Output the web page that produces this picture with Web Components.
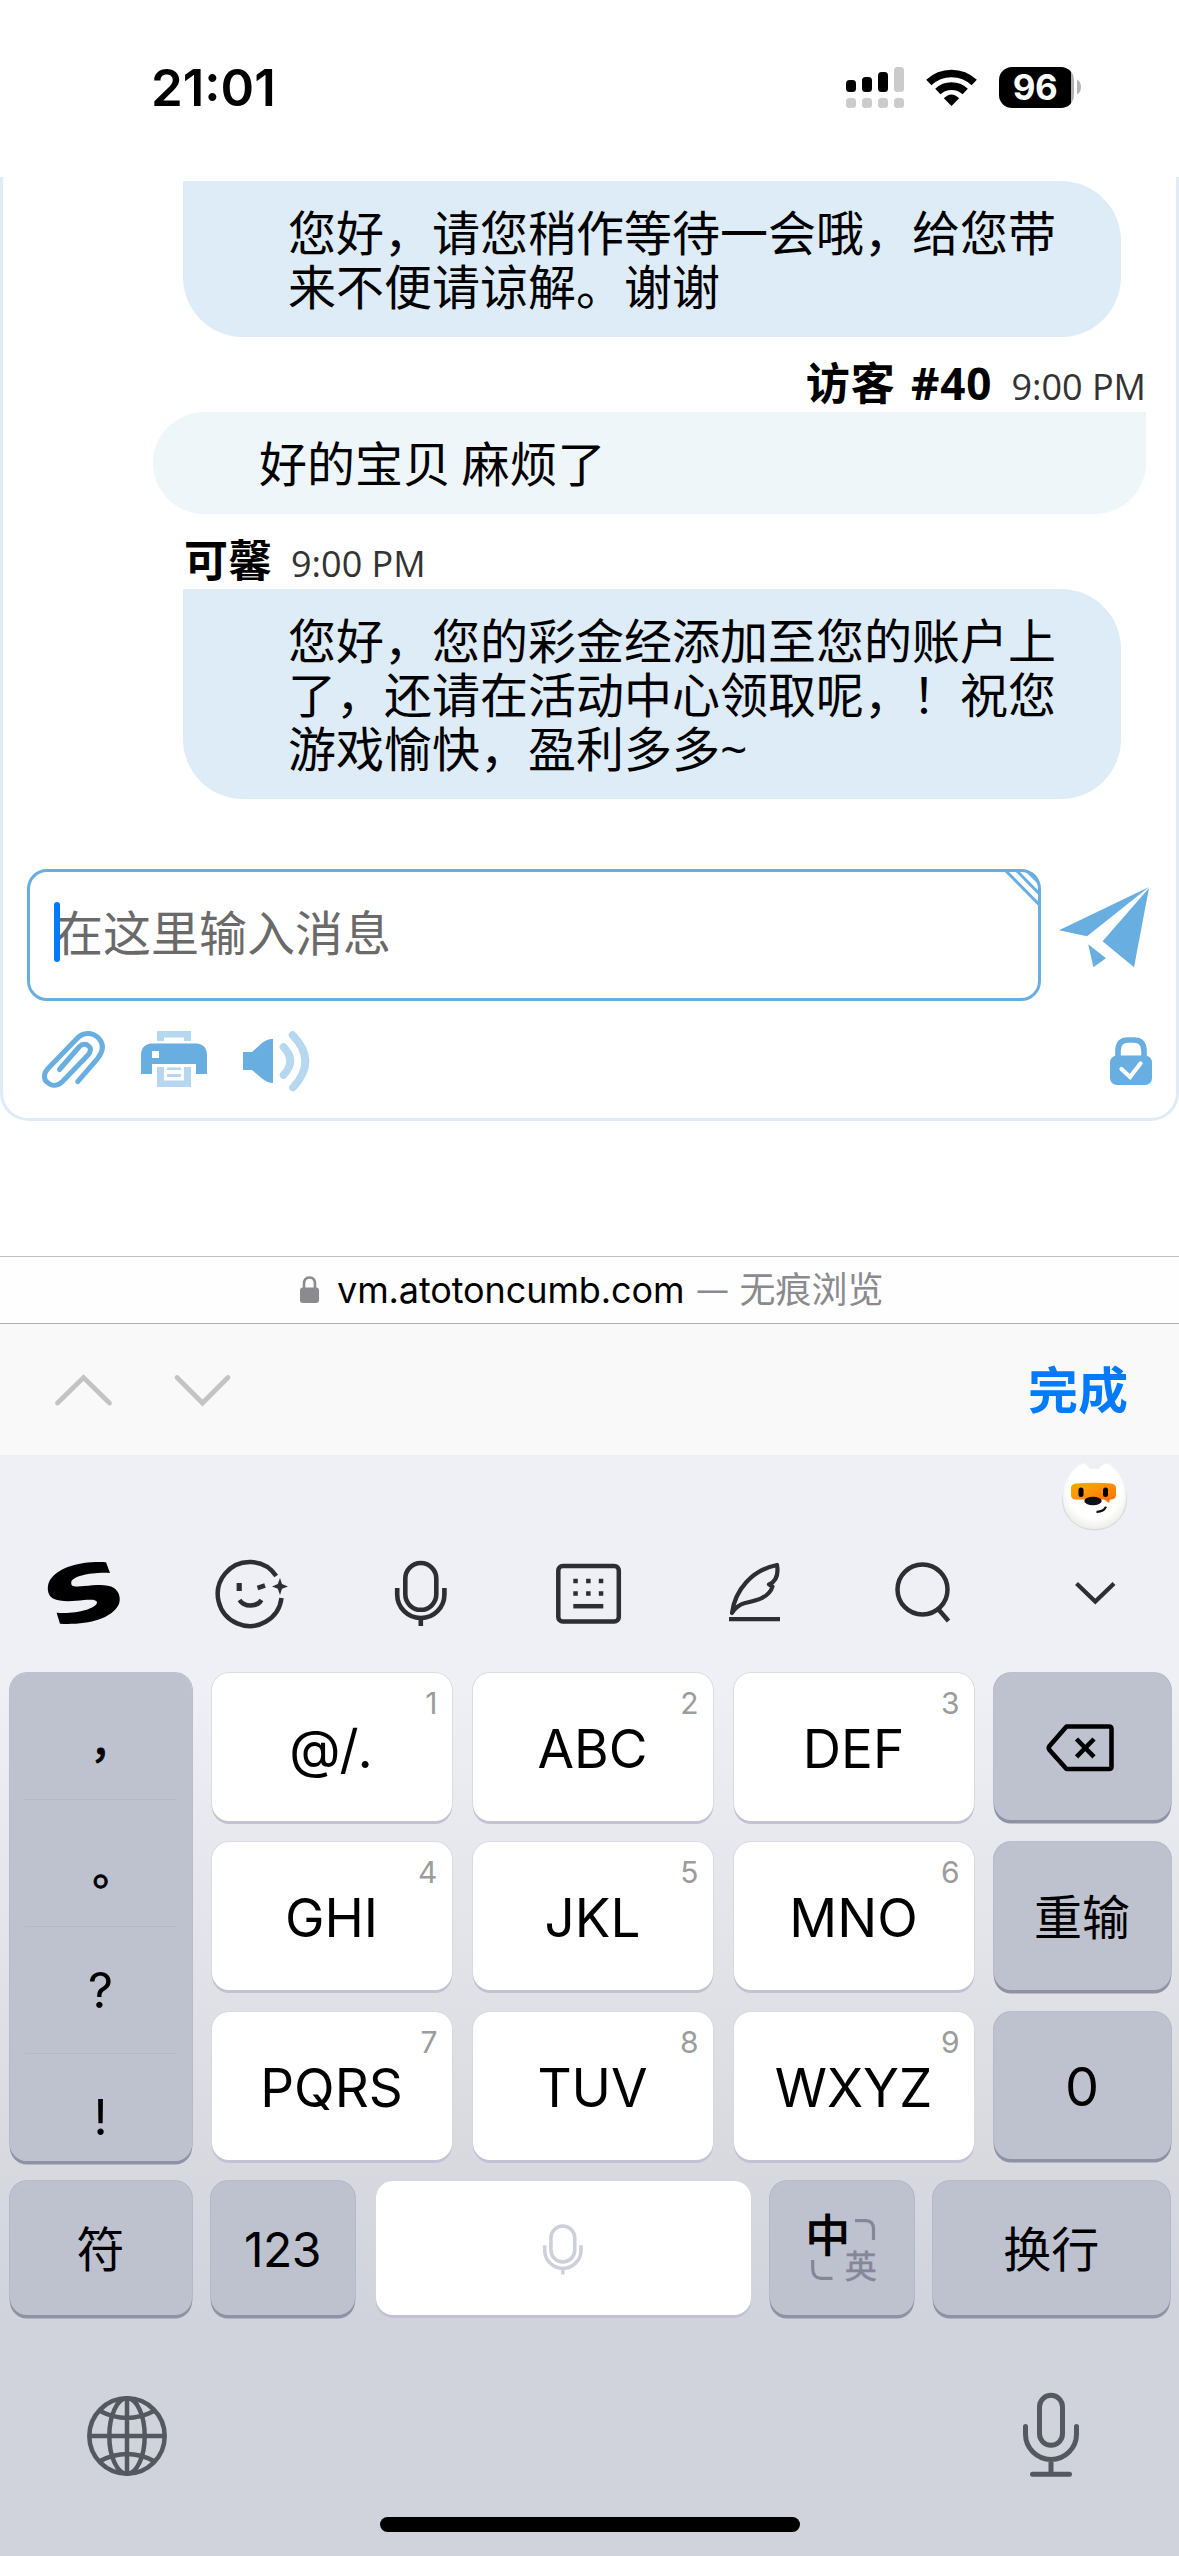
<!DOCTYPE html>
<html lang="zh-CN">
<head>
<meta charset="utf-8">
<title>Chat</title>
<style>
html,body{margin:0;padding:0;background:#fff}
body{width:1179px;height:2556px;overflow:hidden;font-family:"Inter","Noto Sans CJK SC",sans-serif;color:#000;text-spacing-trim:space-all}
</style>
</head>
<body>
<phone-screen></phone-screen>
<script>
const ICONS = {
  signal:`<g fill="#000"><rect x="846" y="80" width="10" height="12" rx="3.5"/><rect x="862" y="77" width="10" height="15" rx="3.5"/><rect x="878" y="72" width="10" height="20" rx="3.5"/></g><g fill="#cbcbcb"><rect x="894" y="67" width="10" height="25" rx="3.5"/><rect x="846" y="98" width="10" height="10" rx="3.5"/><rect x="862" y="98" width="10" height="10" rx="3.5"/><rect x="878" y="98" width="10" height="10" rx="3.5"/><rect x="894" y="98" width="10" height="10" rx="3.5"/></g>`,
  wifi:`<g fill="none" stroke="#000" stroke-width="7.6"><path d="M928.8 82.5A33 33 0 0 1 974.2 82.5"/><path d="M937.8 91.6A20 20 0 0 1 965.2 91.6"/></g><path d="M951.5 106L943.8 98.2Q951.5 90.6 959.2 98.2Z"/>`,
  clip:`<path d="M77.7 1081.6L97.5 1058.6C103.500 1051 104 1043.500 98 1037.500C92 1032 83 1032 77 1038.500L48.500 1068C43.500 1073 43 1079 47.500 1082.500C52 1086.500 58 1086 62.500 1081.500L87.500 1055.500C91 1051.500 91.500 1048 88.500 1046C86 1043.500 82 1043.800 79 1047L59.500 1069.500" fill="none" stroke="#69aee0" stroke-width="5" stroke-linecap="round"/>`,
  printer:`<path d="M157 1041V1031H191V1041H184V1037.500H164V1041Z" fill="#b5d7f0"/><path d="M152 1043.600H196Q207 1044 207 1056V1074H196V1064H152V1074H141V1056Q141 1044 152 1043.600ZM152 1051V1058H159V1051Z" fill="#69aee0" fill-rule="evenodd"/><path d="M157 1067H164V1080.500H184V1067H191V1087H157ZM167 1067.500H181V1070H167ZM167 1074H181V1077H167Z" fill="#b5d7f0"/>`,
  speaker:`<path d="M243 1052H252L262 1043Q268 1038.500 273 1039V1083Q268 1083 262 1078.500L252 1070H243Z" fill="#69aee0"/><g fill="none" stroke="#b5d7f0" stroke-width="7.6" stroke-linecap="round"><path d="M283.500 1047Q297 1061 283.500 1075"/><path d="M292.500 1035Q318 1061 293 1087.500"/></g>`,
  plane:`<g fill="#69aee0"><path d="M1149 887L1059 930.300L1087 936.300Z"/><path d="M1149 888L1102.600 941.300L1134 967.300Z"/><path d="M1088.200 944.300L1106 958.300L1093.400 967.300Z"/></g>`,
  secure:`<path d="M1118 1058V1051Q1118 1040 1128 1040H1134Q1144 1040 1144 1051V1058" fill="none" stroke="#69aee0" stroke-width="5.600"/><rect x="1110" y="1055.500" width="42" height="29.500" rx="7" fill="#69aee0"/><path d="M1121.500 1069L1130 1077L1140.500 1063.500" fill="none" stroke="#fff" stroke-width="4.200" stroke-linecap="round"/>`,
  hatch:`<g stroke="#69aee0" stroke-width="3" fill="none"><path d="M1006 871L1040 905.500"/><path d="M1017 871L1040 894.500"/></g><path d="M1024 870Q1038 871 1040 886Z" fill="#69aee0"/>`,
  lock:`<path d="M304 1289V1284Q304 1277.500 309.500 1277.500Q315 1277.500 315 1284V1289" fill="none" stroke="#8a8a8f" stroke-width="2.600"/><rect x="300" y="1287.500" width="19" height="15.500" rx="3" fill="#8a8a8f"/>`,
  up:`<path d="M57.500 1402L83.500 1376.500L109.500 1402" fill="none" stroke="#c3c3c4" stroke-width="4.800" stroke-linecap="round"/>`,
  down:`<path d="M177 1377.500L202.500 1403L228 1377.500" fill="none" stroke="#c3c3c4" stroke-width="4.800" stroke-linecap="round"/>`,
  fox:`<defs><radialGradient id="b" cx=".5" cy=".42" r=".6"><stop offset=".7" stop-color="#fff"/><stop offset="1" stop-color="#ecebe4"/></radialGradient><linearGradient id="o" x1="0" y1="0" x2="1" y2="1"><stop offset=".3" stop-color="#ff9d05"/><stop offset="1" stop-color="#ff6a05"/></linearGradient></defs><ellipse cx="1094.500" cy="1500" rx="32.500" ry="30.500" fill="#d9dae0"/><path d="M1083 1463Q1086 1464 1090 1469Q1094.500 1468.300 1098.500 1469Q1103 1464 1107 1463C1118 1467 1126 1484 1126 1498C1126 1516 1113 1529 1094.500 1529C1076 1529 1063 1516 1063 1498C1063 1484 1071 1467 1083 1463Z" fill="url(#b)"/><path d="M1076 1483.500Q1094 1482 1111 1483.500Q1116 1484 1116 1488V1495Q1116 1499.500 1110 1499.500L1109 1503L1104 1499.500H1076Q1071 1499.500 1071 1495V1488Q1071 1484 1076 1483.500Z" fill="url(#o)"/><rect x="1078.500" y="1487.500" width="5" height="9.500" rx="2.500"/><rect x="1103" y="1487.500" width="5" height="9.500" rx="2.500"/><ellipse cx="1093" cy="1501" rx="8.700" ry="4.200" fill="#111"/><path d="M1096.500 1511.800Q1103.500 1512 1106 1506.800" fill="none" stroke="#111" stroke-width="2.200"/>`,
  sogou:`<path d="M106 1562.300L110 1573C92 1572 72 1576 71.200 1582.500C71 1587.500 76 1586.600 84 1586C96 1585 107 1583.500 114 1588C120 1592 121 1600 118.500 1605C110 1620 86 1625 60 1623.700L56.600 1612.700C74 1614.500 96 1609 97 1602.800C97 1599 90 1599.500 84 1600C72 1601.500 60 1602 53 1598.500C47 1595 47 1587 49 1582C57 1566 84 1561 106 1562.300Z"/>`,
  emoji:`<g fill="none" stroke="#2d2d32" stroke-width="4.500"><path d="M276.200 1576A32 32 0 1 0 281.500 1598"/><path d="M239.500 1600Q243 1605.500 250.500 1605.500Q258 1605.500 261.500 1600"/><path d="M239.200 1583V1591" stroke-width="5.200"/><path d="M257.500 1588L265 1585.500"/></g><path d="M280 1578L282 1584L288 1586.500L282 1588.800L280 1595L277.800 1588.800L272 1586.500L277.800 1584Z" fill="#2d2d32"/>`,
  mic:`<g fill="none" stroke="currentColor" stroke-width="4.600"><rect x="405.300" y="1563" width="31" height="46.800" rx="15.500"/><path d="M397.200 1588V1594.500A23.600 23.600 0 0 0 444.400 1594.500V1588M420.800 1618V1626"/></g>`,
  board:`<g fill="none" stroke="#2d2d32" stroke-width="4.500"><rect x="558" y="1566" width="60.500" height="55.500" rx="4.500"/><path d="M573 1606.200H603"/><path d="M573 1581H577.500M585.800 1581H590.300M598.500 1581H603M573 1593.500H577.500M585.800 1593.500H590.300M598.500 1593.500H603" stroke-width="4.300"/></g>`,
  feather:`<g fill="none" stroke="#2d2d32" stroke-width="4.200" stroke-linejoin="round" stroke-linecap="round"><path d="M732 1613C735 1590 752 1570 777 1565Q779.500 1580 769 1584.500L772.500 1586.500C769 1598 756 1600.500 745 1603Q737 1605 732 1613Z"/><path d="M729 1619.200H780" stroke-linecap="butt"/></g>`,
  search:`<g fill="none" stroke="#2d2d32" stroke-width="4.500"><circle cx="922.500" cy="1589.500" r="25"/><path d="M939 1610L948.500 1621"/></g>`,
  fold:`<path d="M1076.500 1583.500L1095.300 1601.500L1114 1583.500" fill="none" stroke="#2d2d32" stroke-width="4.200"/>`,
  erase:`<g fill="none" stroke="#000" stroke-width="4.600" stroke-linejoin="round"><path d="M1065.500 1727.500H1108Q1110.500 1727.500 1110.500 1730V1767.500Q1110.500 1770 1108 1770H1065.500L1048.500 1751Q1047 1749 1048.500 1747Z"/><path d="M1075.500 1740L1093 1757.800M1093 1740L1075.500 1757.800"/></g>`,
  swap:`<g fill="none" stroke="#86869a" stroke-width="3.200"><path d="M855 2220.700H866Q873.500 2221 873.500 2229V2240"/><path d="M812.700 2260V2269Q813 2278 821 2278.300H832.500"/></g>`,
  globe:`<g fill="none" stroke="#54585f" stroke-width="4.500"><circle cx="127" cy="2436" r="37.700"/><ellipse cx="127" cy="2436" rx="17.700" ry="37.700"/><path d="M127 2398V2474M89 2436H165M100 2411Q127 2425 154 2411M100 2461Q127 2447 154 2461"/></g>`,
  dictate:`<g fill="none" stroke="#54585f" stroke-width="5" stroke-linecap="round"><rect x="1039.500" y="2393.300" width="23" height="50" rx="11.500"/><path d="M1025.500 2424.500V2432A25.500 25.500 0 0 0 1076.500 2432V2424.500M1051 2458V2472M1032.500 2472.300H1069.500"/></g>`
};
const define = (name, html, after) => customElements.define(name, class extends HTMLElement {
  connectedCallback(){
    if (this.shadowRoot) return;
    this.attachShadow({mode:'open'}).innerHTML = html;
    if (after) after(this, this.shadowRoot);
  }
});

/* box = "x y w h" in screen units, used both for the viewBox and the drawn size */
define('ui-icon', `<style>:host{display:block;flex:none}svg{display:block;overflow:visible}</style>`, (el, root) => {
  const b = el.getAttribute('box'), [,,w,h] = b.split(' ');
  root.innerHTML += `<svg viewBox="${b}" width="${el.getAttribute('w')||w}" height="${el.getAttribute('h')||h}">${ICONS[el.getAttribute('name')]}</svg>`;
});

define('status-bar', `<style>
:host{display:flex;height:177px;box-sizing:border-box;padding:0 98px 0 151px;align-items:flex-start}
.time{font:600 51px/60px Inter,sans-serif;margin-top:58px;flex:1}
.r{display:flex;margin-top:67px}
.bat{margin-left:22px;width:75px;height:41px;border-radius:13px;background:linear-gradient(90deg,#000 72px,#b0b0b0 72px);color:#fff;font:700 35px/41px Inter,sans-serif;text-align:center;letter-spacing:-.5px;text-indent:-3px}
.nub{width:4px;height:14px;margin:13px 0 0 3px;border-radius:0 4px 4px 0/0 7px 7px 0;background:#b4b4b4}
.wifi{margin-left:22px}
</style><div class="time">21:01</div><div class="r"><ui-icon name="signal" box="846 67 58 41"></ui-icon><ui-icon class="wifi" name="wifi" box="926 67 51 41"></ui-icon><div class="bat">96</div><div class="nub"></div></div>`);

define('chat-bubble', `<style>
:host{display:block;box-sizing:border-box;padding:25px 0 23px 105px;margin:0 55px 0 180px;border-radius:0 60px 60px 60px;background:#deecf8;font:400 48px/54px "Open Sans","Noto Sans CJK SC",sans-serif;white-space:nowrap}
:host([mine]){margin:0 30px 0 150px;padding-left:106px;border-radius:51px 0 51px 51px;background:#eef6fa;word-spacing:-2px}
</style><slot></slot>`);

define('chat-meta', `<style>
:host{display:flex;height:75px;box-sizing:border-box;padding:19px 30px 0 181px;gap:19px;align-items:baseline;font:400 36px/54px "Open Sans",sans-serif;color:#333}
:host([mine]){justify-content:flex-end}
b{font:700 44px/54px "Open Sans","Noto Sans CJK SC",sans-serif;color:#000;word-spacing:3px}
:host([mine]) b{letter-spacing:.9px}
</style><b><slot name="who"></slot></b><span><slot></slot></span>`);

define('message-box', `<style>
:host{display:flex;margin:70px 27px 0 24px;align-items:flex-start;justify-content:space-between}
.in{position:relative;box-sizing:border-box;width:1014px;height:132px;border:3px solid #69aee0;border-radius:20px;padding:28px 0 0 25px;font:400 48px/60px "Noto Sans CJK SC",sans-serif;color:#6a6a6a}
.caret{position:absolute;left:24px;top:30px;width:6px;height:60px;border-radius:3px;background:#007aff}
.h{position:absolute;right:-2px;top:-3px}
.p{margin-top:18px}
</style><div class="in">在这里输入消息<i class="caret"></i><ui-icon class="h" name="hatch" box="1004 869 36 38"></ui-icon></div><ui-icon class="p" name="plane" box="1059 887 90 81"></ui-icon>`);

define('chat-tools', `<style>:host{display:flex;margin:30px 24px 0 39px;gap:36px}.s{margin:6px 0 0 auto}</style>
<ui-icon name="clip" box="42 1031 63 60"></ui-icon><ui-icon name="printer" box="141 1031 66 60"></ui-icon><ui-icon name="speaker" box="243 1031 66 60"></ui-icon><ui-icon class="s" name="secure" box="1110 1037 42 48"></ui-icon>`);

define('chat-panel', `<style>:host{display:block;box-sizing:border-box;height:944px;border:3px solid #deecf8;border-top:0;border-radius:0 0 28px 28px;padding-top:4px}</style>
<chat-bubble>您好，请您稍作等待一会哦，给您带<br>来不便请谅解。谢谢</chat-bubble>
<chat-meta mine><span slot="who">访客 #40</span>9:00 PM</chat-meta>
<chat-bubble mine>好的宝贝 麻烦了</chat-bubble>
<chat-meta><span slot="who">可馨</span>9:00 PM</chat-meta>
<chat-bubble>您好，您的彩金经添加至您的账户上<br>了，还请在活动中心领取呢，！祝您<br>游戏愉快，盈利多多~</chat-bubble>
<message-box></message-box><chat-tools></chat-tools>`);

define('url-bar', `<style>:host{display:flex;box-sizing:border-box;height:68px;margin-top:135px;border-top:1px solid #c2c2c4;border-bottom:1px solid #b0b0b2;padding-left:300px;background:#fefefe;font:400 36px/66px Inter,"Noto Sans CJK SC",sans-serif;white-space:pre}
ui-icon{margin:19px 18px 0 0}.u{letter-spacing:-.1px}.g{color:#8a8a8f}.g.d{margin:0 12px 0 13px;font-size:30px}</style>
<ui-icon name="lock" box="300 1276 19 28"></ui-icon><span class="u">vm.atotoncumb.com</span><span class="g d">—</span><span class="g">无痕浏览</span>`);

define('input-accessory', `<style>:host{display:flex;height:131px;background:#f9f9f9;align-items:center;padding:0 51px 0 55px;font:700 50px/60px "Noto Sans CJK SC",sans-serif;color:#007aff}
.d{margin-left:62px}span{margin:-5px 0 0 auto}</style>
<ui-icon name="up" box="55 1373 57 32"></ui-icon><ui-icon class="d" name="down" box="174 1374 57 32"></ui-icon><span>完成</span>`);

define('kb-tools', `<style>:host{display:flex;margin:27px 62px 0 48px;height:72px;align-items:flex-start;color:#2d2d32}
.a{margin-left:96px}.b{margin-left:106px}.c{margin-left:108.700px}.d{margin-left:108.300px}.e{margin-left:115px}.f{margin-left:125px}
</style>
<ui-icon name="sogou" box="48 1558 72 70"></ui-icon><ui-icon class="a" name="emoji" box="216 1558 73 70"></ui-icon><ui-icon class="b" name="mic" box="395 1558 52 70"></ui-icon><ui-icon class="c" name="board" box="555.7 1558 65 70"></ui-icon><ui-icon class="d" name="feather" box="729 1558 51 70"></ui-icon><ui-icon class="e" name="search" box="895 1558 55 70"></ui-icon><ui-icon class="f" name="fold" box="1075 1558 41 70"></ui-icon>`);

define('kb-key', `<style>
:host{position:relative;display:flex;box-sizing:border-box;align-items:center;justify-content:center;background:#fff;border-radius:17px;box-shadow:0 3px 0 #c3c2d4,0 0 0 .8px #d5d6e0;font:400 53px/60px Inter,"Noto Sans CJK SC",sans-serif;color:#000;height:148px;width:240px;padding-top:4px}
:host([dark]){background:#bec2cf;box-shadow:0 3.500px 0 #8f91a4,0 0 0 .8px #adb1c2;height:147.500px;width:177px}
:host([low]){height:134px}
i{position:absolute;right:14px;top:13px;font:400 30px/34px Inter,sans-serif;color:#9c9c9c}
</style><slot></slot>`, (el, root) => { if (el.hasAttribute('n')) root.innerHTML += `<i>${el.getAttribute('n')}</i>`; });

define('kb-punct', `<style>
:host{display:block;box-sizing:border-box;width:182px;height:488px;overflow:hidden;border-radius:17px;padding:0 15px;background:#bec2cf;font:400 49px/128px Inter,"Noto Sans CJK TC",sans-serif;text-align:center}
div{height:126px;border-bottom:1px solid #b4b7c8}
.c{line-height:158px;height:126px;font-family:"Noto Sans CJK TC",sans-serif;font-size:43px;-webkit-text-stroke:1px #000}
</style><div class="c" lang="zh-TW">，</div><div class="c" lang="zh-TW">。</div><div>?</div><div>!</div>`);

define('key-board', `<style>
:host{display:flex;flex-direction:column;height:1101px;background:linear-gradient(#eff0f5 0,#eff0f5 230px,#d9dae0 690px,#d0d3dc 870px,#d0d3dc 100%)}
.fox{margin:8px 0 0 1062px}
.rows{display:flex;margin:42.500px 8.500px 0 9.500px;justify-content:space-between}
.grid{display:grid;grid-template-columns:repeat(3,240px);gap:21.500px 21px}
.side{display:flex;flex-direction:column;gap:22px}
.side ui-icon{margin-right:5px}
.pw{border-radius:17px;box-shadow:0 3.500px 0 #8f91a4,0 0 0 .8px #adb1c2;height:488px}
.last{display:flex;margin:20px 9px 0 9.500px;gap:19px}
.sw{display:grid;position:relative;width:66px;height:68px;margin-top:-6px}
.sw b{font:400 44px/44px "Noto Sans CJK SC",sans-serif;-webkit-text-stroke:1.300px #000;position:absolute;left:-3px;top:-2px}
.sw em{font:400 32px/32px "Noto Sans CJK SC",sans-serif;-webkit-text-stroke:.6px #86869a;position:absolute;left:36px;top:35px;color:#86869a}
.sw ui-icon{margin:6px 0 0 2px}
.zh{font-size:48px}
.num{font-size:48px;letter-spacing:-.5px}
.zero{font-size:54px}
.wide{letter-spacing:1px}
.foot{display:flex;justify-content:space-between;margin:75.500px 98px 0 86px}
.home{width:420px;height:15px;border-radius:8px;background:#000;margin:39px auto 0}
</style>
<ui-icon class="fox" name="fox" box="1062 1463 65 68"></ui-icon>
<kb-tools></kb-tools>
<div class="rows">
<div class="pw"><kb-punct></kb-punct></div>
<div class="grid"><kb-key n="1"><span class="wide">@/.</span></kb-key><kb-key n="2">ABC</kb-key><kb-key n="3">DEF</kb-key><kb-key n="4">GHI</kb-key><kb-key n="5">JKL</kb-key><kb-key n="6">MNO</kb-key><kb-key n="7">PQRS</kb-key><kb-key n="8">TUV</kb-key><kb-key n="9">WXYZ</kb-key></div>
<div class="side"><kb-key dark><ui-icon name="erase" box="1045 1725 68 48"></ui-icon></kb-key><kb-key dark><span class="zh">重输</span></kb-key><kb-key dark><span class="zero">0</span></kb-key></div>
</div>
<div class="last">
<kb-key dark low style="width:182px"><span class="zh">符</span></kb-key>
<kb-key dark low style="width:144px"><span class="num">123</span></kb-key>
<kb-key low style="width:375px;margin-left:2px"><ui-icon name="mic" box="395 1560 52 67" w="40" h="53" style="color:#cdcfdb"></ui-icon></kb-key>
<kb-key dark low style="width:144.5px"><div class="sw"><ui-icon name="swap" box="811 2219 65 62"></ui-icon><b>中</b><em style="font-style:normal">英</em></div></kb-key>
<kb-key dark low style="width:236.5px"><span class="zh">换行</span></kb-key>
</div>
<div class="foot"><ui-icon name="globe" box="86 2390 82 88"></ui-icon><ui-icon name="dictate" box="1022 2388 59 88"></ui-icon></div>
<div class="home"></div>`);

define('phone-screen', `<style>:host{display:flex;flex-direction:column;width:1179px;height:2556px;background:#fff;overflow:hidden}status-bar,chat-panel,url-bar,input-accessory,key-board{flex:none}</style>
<status-bar></status-bar><chat-panel></chat-panel><url-bar></url-bar><input-accessory></input-accessory><key-board></key-board>`);
</script>
</body>
</html>
